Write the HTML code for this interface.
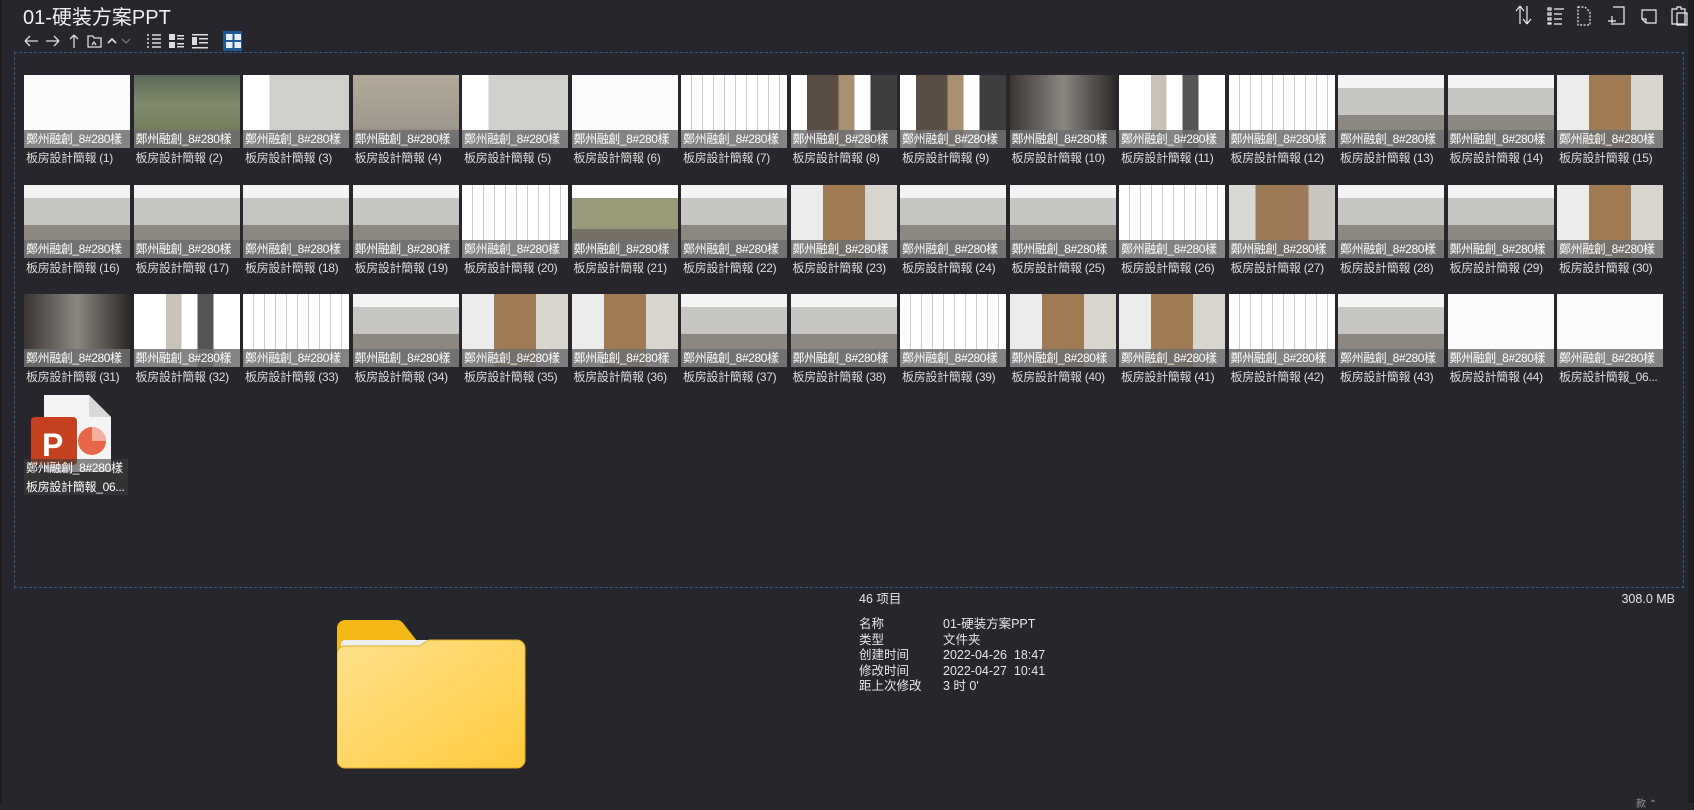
<!DOCTYPE html>
<html><head><meta charset="utf-8">
<style>
*{margin:0;padding:0;box-sizing:border-box}
body{width:1694px;height:803px;background:#27262c;position:relative;overflow:hidden;font-family:"Liberation Sans","Noto Sans CJK SC",sans-serif;color:#e8e8e8}
.abs{position:absolute}
.title{left:23px;top:1px;font-size:20px;color:#f0f0f0}
.box{left:14px;top:52px;width:1670px;height:536px;border:1px dashed #2e5f93}
.th{position:absolute;width:106px}
.img{position:absolute;left:0;top:0;width:106px;height:73px;overflow:hidden}
.l1{position:absolute;left:0;top:55px;width:106px;height:18px;background:rgba(110,110,112,.85);font-size:12px;letter-spacing:-0.4px;line-height:18px;color:#fff;white-space:nowrap;overflow:hidden;padding-left:2px}
.l2{position:absolute;left:0;top:74px;font-size:12px;letter-spacing:-0.3px;line-height:18px;color:#ddd;white-space:nowrap;padding-left:2px}
.info{font-size:12.5px;color:#e6e6e6;line-height:15.5px;white-space:nowrap}
svg{position:absolute}
</style></head><body>
<div class="abs title">01-硬装方案PPT</div>
<svg style="left:22px;top:31px" width="220" height="20" viewBox="0 0 220 20" fill="none" stroke="#ddd" stroke-width="1.3">
<path d="M3 10h13M3 10l5-5M3 10l5 5"/>
<path d="M24 10h13M37 10l-5-5M37 10l-5 5"/>
<path d="M52 4v13M52 4l-4 4M52 4l4 4"/>
<path d="M66 5h5l1 2h7v9H66z M70 14l2-3 2 3"/>
<path d="M86 12l4-4 4 4" stroke-width="1.6"/>
<path d="M100 8l4 4 4-4" stroke="#777"/>
<g stroke-width="1.6"><path d="M125 4h2M130 4h9M125 8h2M130 8h9M125 12h2M130 12h9M125 16h2M130 16h9"/></g>
<g fill="#ddd" stroke="none"><rect x="147" y="3" width="6" height="6"/><rect x="147" y="11" width="6" height="6"/><rect x="155" y="4" width="7" height="1.5"/><rect x="155" y="7" width="7" height="1.5"/><rect x="155" y="12" width="7" height="1.5"/><rect x="155" y="15" width="7" height="1.5"/>
<rect x="170" y="3" width="16" height="1.5"/><rect x="170" y="6" width="5" height="8"/><rect x="177" y="7" width="9" height="1.5"/><rect x="177" y="11" width="9" height="1.5"/><rect x="170" y="16" width="16" height="1.5"/></g>
<rect x="201" y="0" width="21" height="20" fill="#1f5a94" stroke="none"/>
<g fill="#e8eef5" stroke="none"><rect x="204" y="3" width="6.5" height="6"/><rect x="212.5" y="3" width="6.5" height="6"/><rect x="204" y="11" width="6.5" height="6"/><rect x="212.5" y="11" width="6.5" height="6"/></g>
</svg>
<svg style="left:1510px;top:3px" width="184" height="24" viewBox="0 0 184 24" fill="none" stroke="#eee" stroke-width="1.2">
<path d="M10 3v18M10 3l-4 5M10 3l4 5M17 3v18M17 21l-4-5M17 21l4-5"/>
<path d="M38 5h3v2h-3zM38 10h3v2h-3zM38 15h3v2h-3zM38 20h3v1h-3zM44 6h10M44 11h8M44 16h8M44 21h8"/>
<path d="M68 4h7l5 5v13H68z" stroke-dasharray="2 1.5"/>
<path d="M103 4h11v17h-11M102 13v9M98 18h8"/>
<path d="M132 7h14v13h-10l-4-4z M132 16h4v4"/>
<path d="M162 6h5v-2h4v2h4v15h-13z M167 10h10v12h-10z"/>
</svg>
<div class="abs box"></div>
<div class="abs" style="left:1688px;top:0;width:6px;height:803px;background:#1e1d22"></div>
<div class="abs" style="left:0;top:0;width:2px;height:803px;background:#1e1d22"></div>
<div id="grid"></div>
<svg style="left:28px;top:392px" width="85" height="82" viewBox="0 0 85 82">
<path d="M16 3h45l22 22v55H16z" fill="#f4f4f4"/>
<path d="M61 3v22h22z" fill="#d8d8d8"/>
<circle cx="64" cy="49" r="14" fill="#e8674a"/>
<path d="M64 35a14 14 0 0 1 14 14H64z" fill="#f4b09e"/>
<rect x="3" y="25" width="46" height="48" rx="4" fill="#c4401f"/>
<text x="14" y="64" font-family="Liberation Sans" font-weight="bold" font-size="32" fill="#fff">P</text>
</svg>
<div class="abs" style="left:24px;top:459px;width:104px;height:36px;background:rgba(60,60,62,.6)"></div>
<div class="abs" style="left:26px;top:459px;font-size:12px;letter-spacing:-0.3px;line-height:19px;color:#fff">鄭州融創_8#280樣<br>板房設計簡報_06...</div>
<svg style="left:337px;top:620px" width="190" height="150" viewBox="0 0 190 150">
<path d="M0 8a8 8 0 0 1 8-8h52a8 8 0 0 1 6 3l14 18h100a8 8 0 0 1 8 8v110a8 8 0 0 1-8 8H8a8 8 0 0 1-8-8z" fill="#f4b917"/>
<path d="M4 24a4 4 0 0 1 4-4h85l-8 11H4z" fill="#eef0f6"/>
<defs><linearGradient id="fg" x1="0" y1="0" x2="1" y2="1"><stop offset="0" stop-color="#ffe18d"/><stop offset="1" stop-color="#ffcb3c"/></linearGradient></defs>
<path d="M0 34a8 8 0 0 1 8-8h74l10-6h88a8 8 0 0 1 8 8v112a8 8 0 0 1-8 8H8a8 8 0 0 1-8-8z" fill="url(#fg)" stroke="#e6ad20" stroke-width="1"/>
</svg>
<div class="abs info" style="left:859px;top:592px">46 项目</div>
<div class="abs info" style="left:1575px;top:592px;width:100px;text-align:right">308.0 MB</div>
<div class="abs info" style="left:859px;top:617px">名称<br>类型<br>创建时间<br>修改时间<br>距上次修改</div>
<div class="abs info" style="left:943px;top:617px">01-硬装方案PPT<br>文件夹<br>2022-04-26&nbsp; 18:47<br>2022-04-27&nbsp; 10:41<br>3 时 0'</div>
<div class="abs" style="left:1636px;top:795px;font-size:10px;color:#999">款 ⌃</div>
<script>
var t="w aerial site fog site w plan mat mat dark matl plan room room wood room room room room plan roomy room wood room room plan woodb room room wood dark matl plan room wood wood room room plan wood wood plan room w w".split(" ");
var S={
w:"#fbfbfb",
aerial:"linear-gradient(#5c6a5a,#7f8a6c 40%,#6b7454)",
site:"linear-gradient(90deg,#fff 0 25%,#cfd0cc 25% 100%)",
fog:"linear-gradient(#b3aa9a,#9f988c 70%,#6e675e)",
plan:"repeating-linear-gradient(90deg,#fff 0 10px,#ccc 10px 11px),#fff",
mat:"linear-gradient(90deg,#fff 0 15%,#5a4e44 15% 45%,#a88f70 45% 60%,#fff 60% 75%,#3d3d3d 75%)",
dark:"linear-gradient(90deg,#3a3533,#8a8680 50%,#2b2826)",
matl:"linear-gradient(90deg,#fff 0 30%,#c9c2b8 30% 45%,#fff 45% 60%,#555 60% 75%,#fff 75%)",
room:"linear-gradient(#f4f4f4 0 18%,#c8c6c2 18% 55%,#8c8780 55%)",
roomy:"linear-gradient(#fff 0 18%,#9a9a7a 18% 60%,#777064 60%)",
wood:"linear-gradient(90deg,#ececec 0 30%,#a07a52 30% 70%,#d8d4ce 70%)",
woodb:"linear-gradient(90deg,#d8d8d4 0 25%,#9b7a55 25% 75%,#c8c4be 75%)"
};
var h="";
for(var i=0;i<45;i++){var r=Math.floor(i/15),c=i%15;var x=24+c*109.5,y=75+r*109.5;
h+='<div class="th" style="left:'+x+'px;top:'+y+'px"><div class="img" style="background:'+S[t[i]]+'"></div><div class="l1">鄭州融創_8#280樣</div><div class="l2">'+(i==44?'板房設計簡報_06...':'板房設計簡報 ('+(i+1)+')')+'</div></div>';}
document.getElementById("grid").innerHTML=h;
</script>
</body></html>
